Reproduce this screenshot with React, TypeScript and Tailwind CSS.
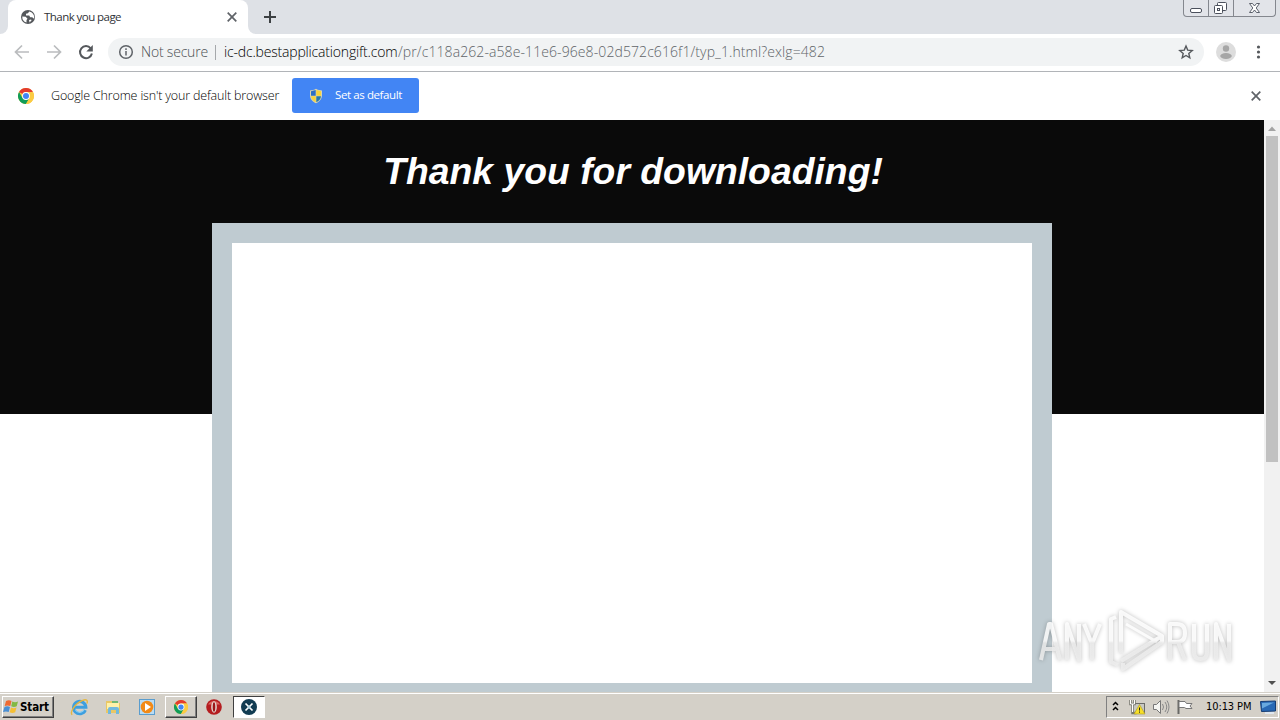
import type { ReactNode } from 'react';

function Globe() {
  return (
    <svg className="h-4 w-4 shrink-0" viewBox="0 0 16 16">
      <circle cx="8" cy="8" r="7" fill="#55585c" />
      <path d="M2.3 7.5l3.4.3 1.8 2-1 1.2v2.6A6 6 0 0 1 2.3 7.5zM9.2 2.4L8 4.2l-2 .6v1.6h3.2l1 1.8h2.2l.8 1.2 1-.3a6.2 6.2 0 0 0-5-6.7zM9 11l2-.6.6.8-2 2.3z" fill="#fff" />
    </svg>
  );
}

function ChromeLogo({ className }: { className: string }) {
  return (
    <svg className={className} viewBox="0 0 16 16">
      <circle cx="8" cy="8" r="8" fill="#fbcb43" />
      <path d="M1.07 4A8 8 0 0 1 14.93 4H8a4 4 0 0 0-3.5 2L8 8z" fill="#e33b2e" />
      <path d="M1.07 4A8 8 0 0 0 8 16l3.5-6L8 8 4.5 10z" fill="#109d58" />
      <path d="M8 4h6.93A8 8 0 0 1 8 16l3.46-6A4 4 0 0 0 8 4z" fill="#fbcb43" />
      <circle cx="8" cy="8" r="3.9" fill="#fff" />
      <circle cx="8" cy="8" r="3" fill="#4285f4" />
    </svg>
  );
}

function Cross({ className }: { className: string }) {
  return (
    <svg className={className} viewBox="0 0 10 10" stroke="#5f6368" strokeWidth="1.700">
      <path d="M.7.7l8.600 8.600M9.300.7L.7 9.300" />
    </svg>
  );
}

function WindowButtons() {
  return (
    <div className="ml-auto mr-[4px] flex h-[17px] w-[93px] rounded-b-[4px] border border-t-0 border-[#84878e] bg-[#e2e4e9]">
      <svg className="h-[16px] w-[91px]" viewBox="0 0 91 16" fill="none" stroke="#4b505c">
        <path d="M24.5 0v16M49.5 0v16" stroke="#84878e" />
        <rect x="6.5" y="8.500" width="11" height="4" rx="1.500" fill="#fff" />
        <rect x="33.500" y="2.500" width="9" height="8" rx="1" fill="#fff" />
        <rect x="30.500" y="5.500" width="8" height="8" rx="1" fill="#fff" />
        <rect x="33.500" y="8.500" width="2" height="2" />
        <path d="M65.500 3.500h3l2 2.500 2-2.500h3l-3.300 4.500 3.300 4.500h-3l-2-2.500-2 2.500h-3l3.300-4.500z" fill="#fff" strokeWidth=".9" />
      </svg>
    </div>
  );
}

function TabStrip() {
  return (
    <div className="flex h-[34px] bg-[#dee1e6]">
      <div className="flex w-2 items-end bg-white">
        <div className="h-full w-2 rounded-br-lg bg-[#dee1e6]" />
      </div>
      <div className="flex w-[240px] items-center rounded-t-lg bg-white pl-[12px]">
        <Globe />
        <span className="ml-[8px] whitespace-nowrap text-[11.5px] tracking-[-0.55px] text-[#303337]">Thank you page</span>
        <Cross className="ml-auto mr-[11px] h-[10px] w-[10px]" />
      </div>
      <div className="w-2 bg-white">
        <div className="h-full w-2 rounded-bl-lg bg-[#dee1e6]" />
      </div>
      <svg className="ml-[7px] mt-[10px] h-[14px] w-[14px]" viewBox="0 0 14 14" stroke="#3c4043" strokeWidth="2">
        <path d="M7 1v12M1 7h12" />
      </svg>
      <WindowButtons />
    </div>
  );
}

function Toolbar() {
  return (
    <div className="flex h-[38px] items-center border-b border-[#b1b4b8] bg-white pb-[1px]">
      <svg className="h-[36px] w-[108px] shrink-0" viewBox="0 0 108 36" fill="none" strokeWidth="1.7">
        <path d="M29 18H16M22 11.500L15.500 18l6.500 6.500M47 18h13M54 11.500l6.500 6.500-6.500 6.500" stroke="#babcbe" />
        <path d="M90.700 14.300A6 6 0 1 0 91.900 19.500" stroke="#55585c" strokeWidth="2" />
        <path d="M92.800 11v6.500h-6.500z" fill="#55585c" />
      </svg>
      <div className="flex h-[28px] w-[1096px] items-center rounded-full bg-[#f1f3f4] pl-[10px] pr-[10px] text-[14px]">
        <svg className="h-4 w-4 shrink-0" viewBox="0 0 16 16" fill="none" stroke="#5f6368" strokeWidth="1.500">
          <circle cx="8" cy="8" r="6.300" />
          <path d="M8 7v4.500M8 4.300v1.600" />
        </svg>
        <span className="ml-[7px] w-[67px] whitespace-nowrap pb-[1px] font-light tracking-[-0.2px] text-[#4b4f53]">Not secure</span>
        <div className="ml-[7px] h-[15px] w-px bg-[#a5a8ab]" />
        <span className="ml-[8px] w-[174px] whitespace-nowrap pb-[1px] font-light tracking-[-0.18px] text-black">ic-dc.bestapplicationgift.com</span>
        <span className="whitespace-nowrap pb-[1px] font-light tracking-[0.09px] text-[#606468]">/pr/c118a262-a58e-11e6-96e8-02d572c616f1/typ_1.html?exlg=482</span>
        <svg className="ml-auto h-4 w-4 shrink-0" viewBox="0 0 16 16" fill="none" stroke="#55585c" strokeWidth="1.400">
          <path d="M8 2l1.700 4.100 4.500.4-3.400 2.900 1 4.400L8 11.500l-3.800 2.300 1-4.400-3.400-2.900 4.500-.4z" />
        </svg>
      </div>
      <svg className="ml-[12px] h-5 w-5" viewBox="0 0 20 20">
        <circle cx="10" cy="10" r="10" fill="#dddddd" />
        <circle cx="10" cy="6.500" r="3.200" fill="#a6a6a6" />
        <ellipse cx="10" cy="14" rx="5.800" ry="2.900" fill="#a6a6a6" />
      </svg>
      <svg className="ml-[20px] h-4 w-[5px]" viewBox="0 0 5 16" fill="#55585c">
        <circle cx="2.500" cy="3" r="1.600" />
        <circle cx="2.500" cy="8" r="1.600" />
        <circle cx="2.500" cy="13" r="1.600" />
      </svg>
    </div>
  );
}

function DefaultBrowserBar() {
  return (
    <div className="flex h-[48px] items-center bg-white pl-[18px]">
      <ChromeLogo className="h-4 w-4" />
      <span className="ml-[17px] w-[229px] whitespace-nowrap text-[12.5px] font-light tracking-[-0.16px] text-black">
        Google Chrome isn't your default browser
      </span>
      <button className="mb-[1px] ml-[12px] flex h-[35px] w-[127px] items-center rounded-[3px] bg-[#4285f4] pl-[16px]">
        <svg className="h-4 w-4" viewBox="0 0 16 16">
          <path d="M8 .7l1.800 1.100 4.200.7v4.800c0 4-3 6.700-6 8-3-1.300-6-4-6-8V2.500l4.200-.7z" fill="#d9d5b0" />
          <path d="M7.700 2v5.700H3V3.300z" fill="#2d6fc4" />
          <path d="M8.300 2v5.700H13V3.300z" fill="#f8d33a" />
          <path d="M7.700 8.200H3c.2 3 2.400 5 4.700 6z" fill="#f8d33a" />
          <path d="M8.300 8.200H13c-.2 3-2.400 5-4.700 6z" fill="#2878a8" />
        </svg>
        <span className="mb-[1px] ml-[11px] whitespace-nowrap text-[11.5px] tracking-[-0.4px] text-white">Set as default</span>
      </button>
      <Cross className="ml-auto mr-[19px] h-[10px] w-[10px]" />
    </div>
  );
}

function Watermark() {
  return (
    <svg className="absolute left-[1029px] top-[600px] h-[80px] w-[220px] drop-shadow-[0_0_2px_rgba(0,0,0,0.3)]" viewBox="0 0 220 80">
      <defs>
        <linearGradient id="fade" gradientUnits="userSpaceOnUse" x1="0" y1="10" x2="0" y2="72">
          <stop offset="0.500" stopColor="#ffffff" />
          <stop offset="0.530" stopColor="#ededed" />
          <stop offset="1" stopColor="#efefef" />
        </linearGradient>
      </defs>
      <g fill="none" stroke="url(#fade)" strokeWidth="4" strokeLinejoin="round" opacity="0.850">
        <path d="M12 60l8-36h2l9 36M15 49h13" />
        <path d="M38 60V24l12 36V24" />
        <path d="M55 24l8 20 8-20M63 43v17" />
        <path d="M141 60V24h7q8 0 8 9t-8 9h-7M149 42l7 18" />
        <path d="M165 24v28q0 7 6.500 7t6.500-7V24" />
        <path d="M187 60V24l13 36V24" />
        <path d="M87 17l-5 2v43l7 3" />
        <path d="M92 53V12l41 24-41 25" />
        <path d="M97 24l31 18" strokeWidth="3" />
        <path d="M133 36v6L94 69v-6" />
      </g>
    </svg>
  );
}

function Scrollbar() {
  return (
    <div className="flex w-4 flex-col items-center bg-[#f1f1f1]">
      <svg className="h-4 w-4" viewBox="0 0 16 16">
        <path d="M4 11l4-4.500 4 4.500z" fill="#a3a3a3" />
      </svg>
      <div className="h-[326px] w-[12px] bg-[#c1c1c1]" />
      <svg className="mt-auto h-4 w-4" viewBox="0 0 16 16">
        <path d="M4 5h8L8 9z" fill="#505050" />
      </svg>
    </div>
  );
}

function Page() {
  return (
    <div className="flex h-[572px] bg-white">
      <div className="flex h-full flex-1 flex-col items-center overflow-hidden bg-linear-to-b from-[#0a0a0a] from-[294px] to-white to-[294px]">
        <h1 className="mt-[25px] h-[78px] shrink-0 whitespace-nowrap pl-[2px] pt-[3px] font-['Liberation_Sans'] text-[37.33px] font-bold italic leading-[46px] text-white">
          Thank you for downloading!
        </h1>
        <div className="h-[480px] w-[840px] shrink-0 border-[20px] border-[#bfcbd1] bg-white" />
      </div>
      <Scrollbar />
    </div>
  );
}

function TaskButton({ pressed, children }: { pressed?: boolean; children: ReactNode }) {
  return (
    <div
      className={`flex h-[22px] w-8 items-center justify-center border ${
        pressed
          ? 'border-b-white border-l-[#404040] border-r-white border-t-[#404040] bg-white'
          : 'border-b-[#404040] border-l-white border-r-[#404040] border-t-white shadow-[inset_-1px_-1px_0_#808080]'
      }`}
    >
      {children}
    </div>
  );
}

function Taskbar() {
  return (
    <div className="flex h-[28px] items-center border-t border-[#d4d0c8] bg-[#d4d0c8] pt-[1px] shadow-[inset_0_1px_0_#fff]">
      <div className="ml-[2px] flex h-[22px] w-[52px] items-center border border-b-[#404040] border-l-white border-r-[#404040] border-t-white shadow-[inset_-1px_-1px_0_#808080]">
        <svg className="h-4 w-4 shrink-0" viewBox="0 0 16 16">
          <path d="M3 2q3-1.500 5.500 0L7.300 7Q4.500 5.800 1.700 7z" fill="#ef6a32" />
          <path d="M9.300 2.500q2.700 1.300 5.700 0L13.700 7.300q-2.800 1.300-5.500 0z" fill="#83b944" />
          <path d="M1.500 8q2.700-1.300 5.500 0l-1.300 5Q3 12 0 13z" fill="#4a8fd4" />
          <path d="M8 8.500q2.700 1.300 5.500 0l-1.300 4.800q-2.800 1.300-5.500 0z" fill="#f5bf35" />
        </svg>
        <span className="ml-[1px] mt-[1px] font-['DejaVu_Sans_Condensed','DejaVu_Sans'] text-[11.5px] font-bold tracking-[-0.1px] text-black">Start</span>
      </div>
      <svg className="ml-[16px] h-[19px] w-[19px]" viewBox="0 0 18 18" fill="none">
        <path d="M14.500 11.500A5.800 5.800 0 1 1 15 8.800H5" stroke="#3d9fdf" strokeWidth="3" />
        <path d="M13.500 10.500A4.600 4.600 0 0 1 5 11" stroke="#88cdf3" />
        <path d="M2 16C-.5 13 5 5 12 2.200c4-1.400 5 .3 4 3" stroke="#e5b63f" strokeWidth="1.300" />
      </svg>
      <svg className="ml-[15px] h-[18px] w-[18px]" viewBox="0 0 18 18">
        <path d="M2 3h6l1 2h7v10H2z" fill="#e9c765" />
        <path d="M3 5h12v6H3z" fill="#fff1a9" />
        <path d="M8 3h6v2H8z" fill="#70b875" />
        <path d="M4 16v-5q0-2 2-2h7q2 0 2 2v5h-3v-4H7v4z" fill="#71b9de" />
      </svg>
      <svg className="ml-[16px] h-[18px] w-[18px]" viewBox="0 0 18 18">
        <rect x="1.500" y="1.500" width="15" height="15" fill="#b9dcf4" stroke="#5a9dce" />
        <circle cx="9" cy="9" r="6.300" fill="#f28a17" />
        <path d="M7 5l6 4-6 4z" fill="#fff" />
      </svg>
      <div className="ml-[9px]">
        <TaskButton>
          <ChromeLogo className="mr-[1px] h-[14px] w-[14px]" />
        </TaskButton>
      </div>
      <svg className="ml-[9px] h-4 w-4" viewBox="0 0 16 16">
        <circle cx="8" cy="8" r="7.800" fill="#b51d20" />
        <path d="M2 5.500a7 7 0 0 1 12 0z" fill="#dc6460" />
        <ellipse cx="8" cy="8" rx="2.800" ry="5.800" fill="#e5dcd6" />
        <ellipse cx="8" cy="8" rx="1.300" ry="4.800" fill="#9c1518" />
      </svg>
      <div className="ml-[11px]">
        <TaskButton pressed>
          <svg className="h-4 w-4" viewBox="0 0 16 16">
            <circle cx="8" cy="8" r="8" fill="#123c52" />
            <path d="M4.500 4.500l7 7M11.500 4.500l-7 7" stroke="#fff" strokeWidth="1.700" />
            <circle cx="8" cy="8" r="1.500" fill="#b9dce8" />
          </svg>
        </TaskButton>
      </div>
      <div className="ml-auto mr-[1px] flex h-[22px] w-[173px] items-center border border-b-white border-l-[#808080] border-r-white border-t-[#808080]">
        <svg className="h-5 w-[96px] shrink-0" viewBox="0 0 96 20" fill="none">
          <path d="M6 8l2.500-2.500L11 8M6 13l2.500-2.500L11 13" stroke="#000" strokeWidth="1.500" />
          <rect x="25.500" y="6.500" width="12" height="9" fill="#c8c8c3" stroke="#6b6b68" />
          <path d="M23.500 3v4h4V3M25.500 7v9h4" stroke="#77776f" strokeWidth="2.500" />
          <path d="M23.500 3v4h4V3M25.500 7v8" stroke="#fff" />
          <path d="M32.500 7.500l5.500 9.500H27z" fill="#f7df28" stroke="#aa9824" strokeWidth=".6" />
          <path d="M32.500 10.500v3M32.500 14.500v1.200" stroke="#222" />
          <path d="M46.500 7.500h3l4-4v13l-4-4h-3z" fill="#f5f5f2" stroke="#777" />
          <path d="M55.500 7q2 3 0 6M58 5q3.500 5 0 10M60 3.500q4 6.500 0 13" stroke="#888" />
          <path d="M71.500 3v14" stroke="#696966" strokeWidth="2" />
          <path d="M72 4.500h6l1.500 2H85l-2 2.500 2 2.500h-6l-1.500-1H72z" fill="#fff" stroke="#777" />
        </svg>
        <span className="ml-[3px] mt-[1px] w-[47px] whitespace-nowrap font-['DejaVu_Sans_Condensed','DejaVu_Sans'] text-[11px] tracking-[-0.1px] text-black">10:13 PM</span>
        <svg className="ml-[7px] h-4 w-4 shrink-0" viewBox="0 0 16 16">
          <path d="M.5 2.500l15-.5v10l-14 .5z" fill="#2869b5" stroke="#153c73" />
          <path d="M2 4l12-.5-12 6z" fill="#68a9df" />
          <path d="M5 14h9" stroke="#dfe7ef" strokeWidth="2" />
        </svg>
      </div>
    </div>
  );
}

export default function App() {
  return (
    <div className="relative flex h-[720px] w-[1280px] flex-col overflow-hidden bg-white font-['Open_Sans','Noto_Sans',sans-serif]">
      <TabStrip />
      <Toolbar />
      <DefaultBrowserBar />
      <Page />
      <Taskbar />
      <Watermark />
    </div>
  );
}
